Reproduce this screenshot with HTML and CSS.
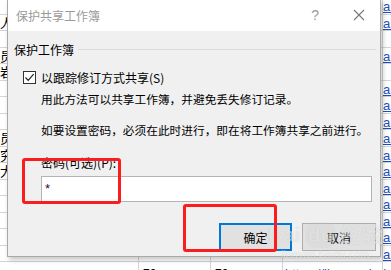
FILE: index.html
```html
<!DOCTYPE html>
<html lang="zh-CN">

<head>
    <meta charset="UTF-8">
    <title>保护共享工作簿</title>
    <link rel="stylesheet" href="styles.css">
</head>

<body>
    <!-- sheet behind the dialog -->
    <div class="sheet">
        <div class="row"><span class="a"></span><span class="b"></span><span class="c"></span><span class="d"></span><span class="e"><u>ai</u></span></div>
        <div class="row"><span class="a">人</span><span class="b"></span><span class="c"></span><span class="d"></span><span class="e"><u>ai</u></span></div>
        <div class="row"><span class="a"></span><span class="b"></span><span class="c"></span><span class="d"></span><span class="e"></span></div>
        <div class="row"><span class="a">员</span><span class="b"></span><span class="c"></span><span class="d"></span><span class="e"><u>ai</u></span></div>
        <div class="row"><span class="a">岩</span><span class="b"></span><span class="c"></span><span class="d"></span><span class="e"></span></div>
        <div class="row"><span class="a"></span><span class="b"></span><span class="c"></span><span class="d"></span><span class="e"><u>ai</u></span></div>
        <div class="row"><span class="a"></span><span class="b"></span><span class="c"></span><span class="d"></span><span class="e"><u>ai</u></span></div>
        <div class="row"><span class="a"></span><span class="b"></span><span class="c"></span><span class="d"></span><span class="e"><u>ai</u></span></div>
        <div class="row"><span class="a">员</span><span class="b"></span><span class="c"></span><span class="d"></span><span class="e"><u>ai</u></span></div>
        <div class="row"><span class="a">究</span><span class="b"></span><span class="c"></span><span class="d"></span><span class="e"><u>ai</u></span></div>
        <div class="row"><span class="a">大</span><span class="b"></span><span class="c"></span><span class="d"></span><span class="e"><u>ai</u></span></div>
        <div class="row"><span class="a"></span><span class="b"></span><span class="c"></span><span class="d"></span><span class="e"><u>ai</u></span></div>
        <div class="row"><span class="a"></span><span class="b"></span><span class="c"></span><span class="d"></span><span class="e"><u>ai</u></span></div>
        <div class="row"><span class="a"></span><span class="b"></span><span class="c"></span><span class="d"></span><span class="e"><u>ai</u></span></div>
        <div class="row"><span class="a"></span><span class="b"></span><span class="c"></span><span class="d"></span><span class="e"><u>ai</u></span></div>
        <div class="row"><span class="a"></span><span class="b"></span><span class="c"></span><span class="d"></span><span class="e"><u>ai</u></span></div>
        <div class="row last"><span class="a"></span><span class="b">70</span><span class="c">70</span><span class="d link"><u>https://jingyan.baidu.com/mai</u></span><span class="e"></span></div>
    </div>

    <!-- dialog window -->
    <div class="dialog">
        <div class="titlebar">
            <span class="title">保护共享工作簿</span>
            <span class="help">?</span>
            <svg class="close" width="12" height="12" viewBox="0 0 12 12">
                <path d="M1 1L11 11M11 1L1 11" stroke="#777" stroke-width="1.1" fill="none" />
            </svg>
        </div>
        <div class="content">
            <div class="group-head">
                <span>保护工作簿</span>
                <span class="group-line"></span>
            </div>
            <label class="check-row">
                <span class="checkbox">
                    <svg width="11" height="11" viewBox="0 0 11 11">
                        <path d="M1.5 5.5L4.2 8.3L9.6 2.2" stroke="#222" stroke-width="1.2" fill="none" />
                    </svg>
                </span>
                <span>以跟踪修订方式共享(S)</span>
            </label>
            <p class="text desc1">用此方法可以共享工作簿，并避免丢失修订记录。</p>
            <p class="text desc2">如要设置密码，必须在此时进行，即在将工作簿共享之前进行。</p>
            <p class="text pw-label">密码(可选)(P):</p>
            <div class="pw-input">*</div>
            <div class="buttons">
                <button class="btn btn-ok">确定</button>
                <button class="btn">取消</button>
            </div>
        </div>
    </div>

    <!-- watermark and red marks drawn over the screenshot -->
    <div class="watermark">
        <span class="wm-big">Bai<span class="wm-du">du</span>经验</span>
        <span class="wm-small">jingyan.baidu.com</span>
    </div>
    <div class="mark mark-pw"></div>
    <div class="mark mark-ok"></div>
</body>

</html>
```

FILE: styles.css
```css
body {
    margin: 0;
    width: 391px;
    height: 270px;
    overflow: hidden;
    position: relative;
    background-color: #fff;
    font-family: "Noto Sans CJK SC", "Microsoft YaHei", sans-serif;
    font-size: 12px;
    color: #000;
}

/* spreadsheet */
.sheet {
    margin-top: -2px;
}

.row {
    display: grid;
    grid-template-columns: 139px 72px 72px 100px 40px;
    height: 16.5px;
    box-sizing: border-box;
    border-bottom: 1px solid #d4d4d4;
    line-height: 16px;
    font-size: 13px;
}

.row span {
    border-right: 1px solid #d4d4d4;
    overflow: hidden;
    white-space: nowrap;
}

.row .b,
.row .c {
    padding-left: 4px;
    font-family: "Liberation Sans", sans-serif;
    font-size: 12px;
    line-height: 18px;
}

.row .e,
.row .link {
    color: #1d4fbf;
    font-family: "Liberation Sans", sans-serif;
    font-size: 13px;
    line-height: 17px;
}

.row .link {
    padding-left: 2px;
    overflow: visible;
}

.row.last span {
    padding-top: 3px;
}

/* dialog */
.dialog {
    position: absolute;
    left: 7px;
    top: -1px;
    width: 374px;
    height: 258px;
    box-sizing: border-box;
    border: 1px solid #a9a9a9;
    border-top: none;
    background-color: #f0f0f0;
    box-shadow: 2px 3px 5px rgba(0, 0, 0, 0.22);
    display: flex;
    flex-direction: column;
}

.titlebar {
    height: 32px;
    background-color: #fff;
    display: flex;
    align-items: center;
    padding-left: 8px;
}

.title {
    flex: 1;
    color: #9a9a9a;
    font-size: 12px;
}

.help {
    color: #9a9a9a;
    font-family: "Liberation Sans", sans-serif;
    font-size: 14px;
    margin-right: 34px;
}

.close {
    margin-right: 15px;
}

.content {
    padding: 0 6px;
}

.group-head {
    display: flex;
    align-items: center;
    gap: 4px;
    height: 16px;
    margin-top: 10px;
}

.group-line {
    flex: 1;
    height: 1px;
    background-color: #dcdcdc;
    margin-right: -2px;
}

.check-row {
    display: flex;
    align-items: center;
    gap: 5px;
    height: 16px;
    margin-top: 12px;
    padding-left: 9px;
}

.checkbox {
    width: 13px;
    height: 13px;
    box-sizing: border-box;
    border: 1px solid #333;
    background-color: #fff;
    display: flex;
    align-items: center;
    justify-content: center;
}

.text {
    margin: 0;
    padding-left: 27px;
    height: 16px;
    line-height: 16px;
    font-size: 11.7px;
    white-space: nowrap;
}

.desc1 {
    margin-top: 6px;
}

.desc2 {
    margin-top: 15px;
}

.pw-label {
    margin-top: 17px;
    font-size: 12px;
}

.pw-input {
    margin: 5px 2px 0 27px;
    height: 26px;
    box-sizing: border-box;
    border: 1px solid #b4b4b4;
    background-color: #fff;
    padding: 4px 0 0 3px;
    font-family: "Liberation Sans", sans-serif;
    font-size: 13px;
    color: #2a1030;
}

.buttons {
    display: flex;
    justify-content: flex-end;
    gap: 10px;
    margin-top: 21px;
    margin-right: -2px;
}

.btn {
    width: 74px;
    height: 28px;
    box-sizing: border-box;
    border: 1px solid #adadad;
    background-color: #e1e1e1;
    font-family: "Noto Sans CJK SC", sans-serif;
    font-size: 12px;
    color: #000;
    padding: 0;
}

.btn-ok {
    width: 73px;
    border: 2px solid #0078d7;
}

/* watermark */
.watermark {
    position: absolute;
    left: 268px;
    top: 222px;
    display: flex;
    flex-direction: column;
    align-items: center;
    color: rgba(255, 255, 255, 0.5);
    text-shadow: 0 0 1px rgba(0, 0, 0, 0.14);
    pointer-events: none;
}

.wm-big {
    font-family: "Liberation Sans", sans-serif;
    font-size: 21px;
    font-weight: bold;
    line-height: 26px;
}

.wm-du {
    display: inline-block;
    margin: 0 4px;
    padding: 0 3px;
    border-radius: 10px;
    background-color: rgba(200, 200, 200, 0.2);
}

.wm-small {
    font-family: "Liberation Sans", sans-serif;
    font-size: 11px;
    line-height: 12px;
}

/* red annotation boxes */
.mark {
    position: absolute;
    border: 3px solid #fb1d1d;
    border-radius: 3px;
    box-sizing: border-box;
}

.mark-pw {
    left: 22px;
    top: 158px;
    width: 99px;
    height: 46px;
}

.mark-ok {
    left: 183px;
    top: 204px;
    width: 94px;
    height: 48px;
}
```
